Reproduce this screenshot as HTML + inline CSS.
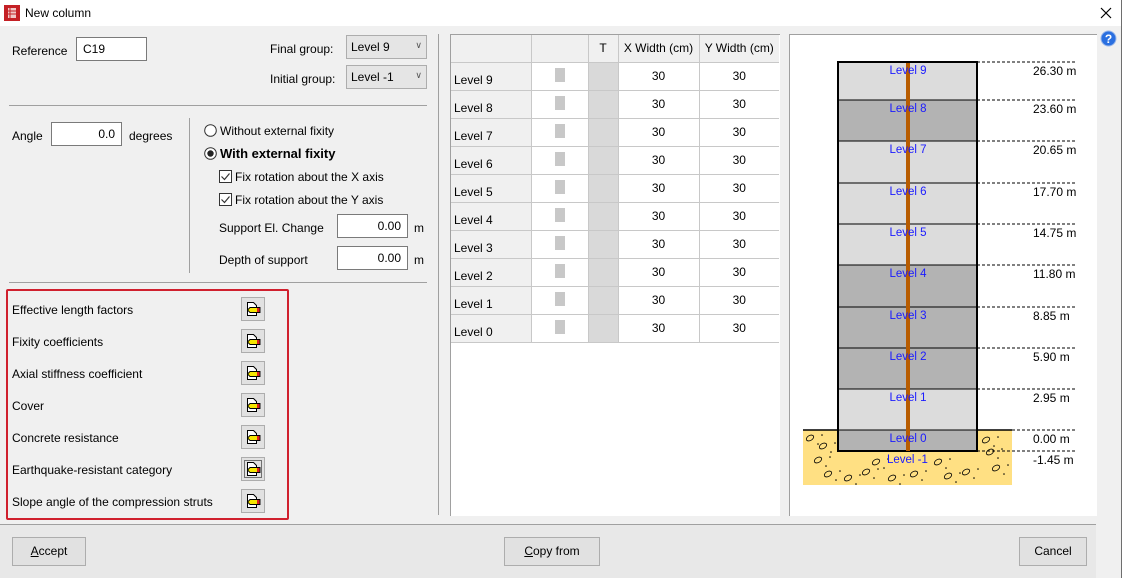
<!DOCTYPE html>
<html><head><meta charset="utf-8">
<style>
*{box-sizing:border-box;margin:0;padding:0}
body{width:1122px;height:578px;background:#f0f0f0;font-family:"Liberation Sans",sans-serif;font-size:12px;color:#000;position:relative;overflow:hidden}
.a{position:absolute}
.title{left:0;top:0;width:1122px;height:26px;background:#fff}
.inp{position:absolute;background:#fff;border:1px solid #7a7a7a;height:24px;font-size:12px;padding:4px 6px;text-align:right}
.sel{position:absolute;background:#e5e5e5;border:1px solid #adadad;height:24px;padding:4px 4px}
.btn{position:absolute;width:24px;height:24px;border:1px solid #adadad;background:#e1e1e1}
.pb{position:absolute;height:29px;border:1px solid #adadad;background:#e1e1e1;text-align:center;line-height:27px}
table{border-collapse:collapse;table-layout:fixed}
</style></head><body>
<div class="a title"></div>
<div class="a" style="left:1121px;top:0;width:1px;height:578px;background:#6e6e6e"></div>
<svg class="a" style="left:4px;top:5px" width="16" height="16"><rect width="16" height="16" fill="#c42025"/><rect x="4" y="3" width="8" height="10" fill="#f0c8c8"/><path d="M4 6h8M4 9h8M6 3v10" stroke="#c42025"/></svg>
<div class="a" style="left:25px;top:6px;font-size:12px">New column</div>
<svg class="a" style="left:1100px;top:7px" width="12" height="12"><path d="M1 1L11 11M11 1L1 11" stroke="#000" stroke-width="1.2"/></svg>
<svg class="a" style="left:1100px;top:30px" width="17" height="17"><circle cx="8.5" cy="8.5" r="7.5" fill="#2a6fe0" stroke="#9bb8ea"/><text x="8.5" y="13" font-size="12" font-weight="bold" fill="#fff" text-anchor="middle" font-family="Liberation Sans">?</text></svg>

<div class="a" style="left:12px;top:44px">Reference</div>
<div class="inp" style="left:76px;top:37px;width:71px;text-align:left">C19</div>
<div class="a" style="left:270px;top:42px">Final group:</div>
<div class="sel" style="left:346px;top:35px;width:81px">Level 9<span style="float:right;font-size:9px;color:#555">&#8744;</span></div>
<div class="a" style="left:270px;top:72px">Initial group:</div>
<div class="sel" style="left:346px;top:65px;width:81px">Level -1<span style="float:right;font-size:9px;color:#555">&#8744;</span></div>
<div class="a" style="left:9px;top:105px;width:418px;height:1px;background:#a0a0a0"></div>

<div class="a" style="left:12px;top:129px">Angle</div>
<div class="inp" style="left:51px;top:122px;width:71px">0.0</div>
<div class="a" style="left:129px;top:129px">degrees</div>
<div class="a" style="left:189px;top:118px;width:1px;height:155px;background:#a0a0a0"></div>
<svg class="a" style="left:204px;top:124px" width="13" height="13"><circle cx="6.5" cy="6.5" r="5.8" fill="#fff" stroke="#333"/></svg>
<div class="a" style="left:220px;top:124px">Without external fixity</div>
<svg class="a" style="left:204px;top:147px" width="13" height="13"><circle cx="6.5" cy="6.5" r="5.8" fill="#fff" stroke="#333"/><circle cx="6.5" cy="6.5" r="3.2" fill="#222"/></svg>
<div class="a" style="left:220px;top:146px;font-weight:bold;font-size:13px">With external fixity</div>
<svg class="a" style="left:219px;top:170px" width="13" height="13"><rect x=".5" y=".5" width="12" height="12" fill="#fff" stroke="#333"/><path d="M2.5 6.5l3 3 5-6" stroke="#333" fill="none" stroke-width="1.2"/></svg>
<div class="a" style="left:235px;top:170px">Fix rotation about the X axis</div>
<svg class="a" style="left:219px;top:193px" width="13" height="13"><rect x=".5" y=".5" width="12" height="12" fill="#fff" stroke="#333"/><path d="M2.5 6.5l3 3 5-6" stroke="#333" fill="none" stroke-width="1.2"/></svg>
<div class="a" style="left:235px;top:193px">Fix rotation about the Y axis</div>
<div class="a" style="left:219px;top:221px">Support El. Change</div>
<div class="inp" style="left:337px;top:214px;width:71px">0.00</div>
<div class="a" style="left:414px;top:221px">m</div>
<div class="a" style="left:219px;top:253px">Depth of support</div>
<div class="inp" style="left:337px;top:246px;width:71px">0.00</div>
<div class="a" style="left:414px;top:253px">m</div>
<div class="a" style="left:9px;top:282px;width:418px;height:1px;background:#a0a0a0"></div>

<div class="a" style="left:6px;top:289px;width:283px;height:231px;border:2px solid #d0202e;border-radius:2px"></div>
<div id="lst"></div>

<div class="a" style="left:438px;top:34px;width:1px;height:481px;background:#a0a0a0"></div>

<div class="a" style="left:450px;top:34px;width:330px;height:482px;background:#fff;border-left:1px solid #a0a0a0;border-top:1px solid #a0a0a0"></div>
<table class="a" style="left:451px;top:35px;width:328px">
<colgroup><col style="width:80px"><col style="width:57px"><col style="width:30px"><col style="width:81px"><col style="width:80px"></colgroup>
<tr style="height:27px;background:#f0f0f0"><td style="border:1px solid #c8c8c8;border-left:none;border-top:none"></td><td style="border:1px solid #c8c8c8;border-top:none"></td><td style="border:1px solid #c8c8c8;border-top:none;text-align:center">T</td><td style="border:1px solid #c8c8c8;border-top:none;text-align:center;white-space:nowrap">X Width (cm)</td><td style="border:1px solid #c8c8c8;border-top:none;border-right:none;text-align:center;white-space:nowrap">Y Width (cm)</td></tr>
<tbody id="tb"></tbody>
</table>

<div class="a" style="left:789px;top:34px;width:308px;height:482px;background:#fff;border-left:1px solid #a0a0a0;border-top:1px solid #a0a0a0"></div>
<svg class="a" style="left:0;top:0" width="1122" height="578" id="dw"></svg>

<div class="a" style="left:0;top:524px;width:1096px;height:1px;background:#a0a0a0"></div>
<div class="a" style="left:0;top:525px;width:1096px;height:53px;background:#e8e8e8"></div>
<div class="pb" style="left:12px;top:537px;width:74px"><u>A</u>ccept</div>
<div class="pb" style="left:504px;top:537px;width:96px"><u>C</u>opy from</div>
<div class="pb" style="left:1019px;top:537px;width:68px">Cancel</div>

<script>
var items=["Effective length factors","Fixity coefficients","Axial stiffness coefficient","Cover","Concrete resistance","Earthquake-resistant category","Slope angle of the compression struts"];
var h="";
items.forEach(function(t,i){var y=297+i*32;
h+='<div class="a" style="left:12px;top:'+(y+6)+'px">'+t+'</div>';
h+='<div class="btn" style="left:241px;top:'+y+'px"><svg width="22" height="22" style="position:absolute;left:0;top:0"><path d="M5.5 4.5h6l3 3v10h-9z" fill="#fff" stroke="#000"/><path d="M8 9.5h10v5H8l-2.5-2.5z" fill="#f5e600" stroke="#000" stroke-width=".9"/><rect x="15" y="10" width="2.5" height="4" fill="#e02020"/>'+(i==5?'<rect x="2.5" y="2.5" width="17" height="17" fill="none" stroke="#000" stroke-dasharray="1 1"/>':'')+'</svg></div>';});
document.getElementById('lst').outerHTML=h;
var r="";
for(var i=9;i>=0;i--){r+='<tr style="height:28px"><td style="background:#f0f0f0;border:1px solid #c8c8c8;border-left:none;padding:8px 0 0 3px">Level '+i+'</td><td style="border:1px solid #c8c8c8;text-align:center"><span style="display:inline-block;width:10px;height:14px;background:#c8c8c8"></span></td><td style="background:#d9d9d9;border:1px solid #c8c8c8"></td><td style="border:1px solid #c8c8c8;text-align:center">30</td><td style="border:1px solid #c8c8c8;border-right:none;text-align:center">30</td></tr>';}
document.getElementById('tb').innerHTML=r;
var b=[62,100,141,183,224,265,307,348,389,430,451];
var dark=[0,1,0,0,0,1,1,1,0,1];
var el=["26.30","23.60","20.65","17.70","14.75","11.80","8.85","5.90","2.95","0.00"];
var s='<rect x="803" y="430" width="209" height="55" fill="#ffe083"/>';
var pts=[[810,438],[823,446],[818,460],[828,474],[848,478],[866,472],[876,462],[892,478],[914,474],[938,462],[948,476],[966,472],[986,440],[990,452],[996,468]];
pts.forEach(function(p){var x=p[0],y=p[1];s+='<ellipse cx="'+x+'" cy="'+y+'" rx="4" ry="2.5" fill="none" stroke="#000" stroke-width=".8" transform="rotate(-30 '+x+' '+y+')"/><circle cx="'+(x+8)+'" cy="'+(y+6)+'" r=".8"/><circle cx="'+(x+12)+'" cy="'+(y-3)+'" r=".8"/>';});
s+='<line x1="803" y1="430" x2="1012" y2="430" stroke="#000" stroke-width="1.5"/>';
for(var i=0;i<10;i++){s+='<rect x="838" y="'+b[i]+'" width="139" height="'+(b[i+1]-b[i])+'" fill="'+(dark[i]?'#b3b3b3':'#dcdcdc')+'" stroke="#000"/>';}
s+='<rect x="838" y="62" width="139" height="389" fill="none" stroke="#000" stroke-width="2"/>';
s+='<rect x="906" y="63" width="4" height="388" fill="#b85c00"/>';
for(var i=0;i<10;i++){s+='<text x="908" y="'+(b[i]+12)+'" fill="#1a1aff" font-size="11.5" text-anchor="middle" font-family="Liberation Sans">Level '+(9-i)+'</text>';
s+='<line x1="977" y1="'+b[i]+'" x2="1075" y2="'+b[i]+'" stroke="#000" stroke-dasharray="3 2"/>';
s+='<text x="1033" y="'+(b[i]+13)+'" font-size="12" font-family="Liberation Sans">'+el[i]+' m</text>';}
s+='<line x1="977" y1="451" x2="1075" y2="451" stroke="#000" stroke-dasharray="3 2"/>';
s+='<text x="1033" y="464" font-size="12" font-family="Liberation Sans">-1.45 m</text>';
s+='<text x="887" y="463" fill="#1a1aff" font-size="11.5" font-family="Liberation Sans">Level -1</text>';
document.getElementById('dw').innerHTML=s;
</script>
</body></html>
